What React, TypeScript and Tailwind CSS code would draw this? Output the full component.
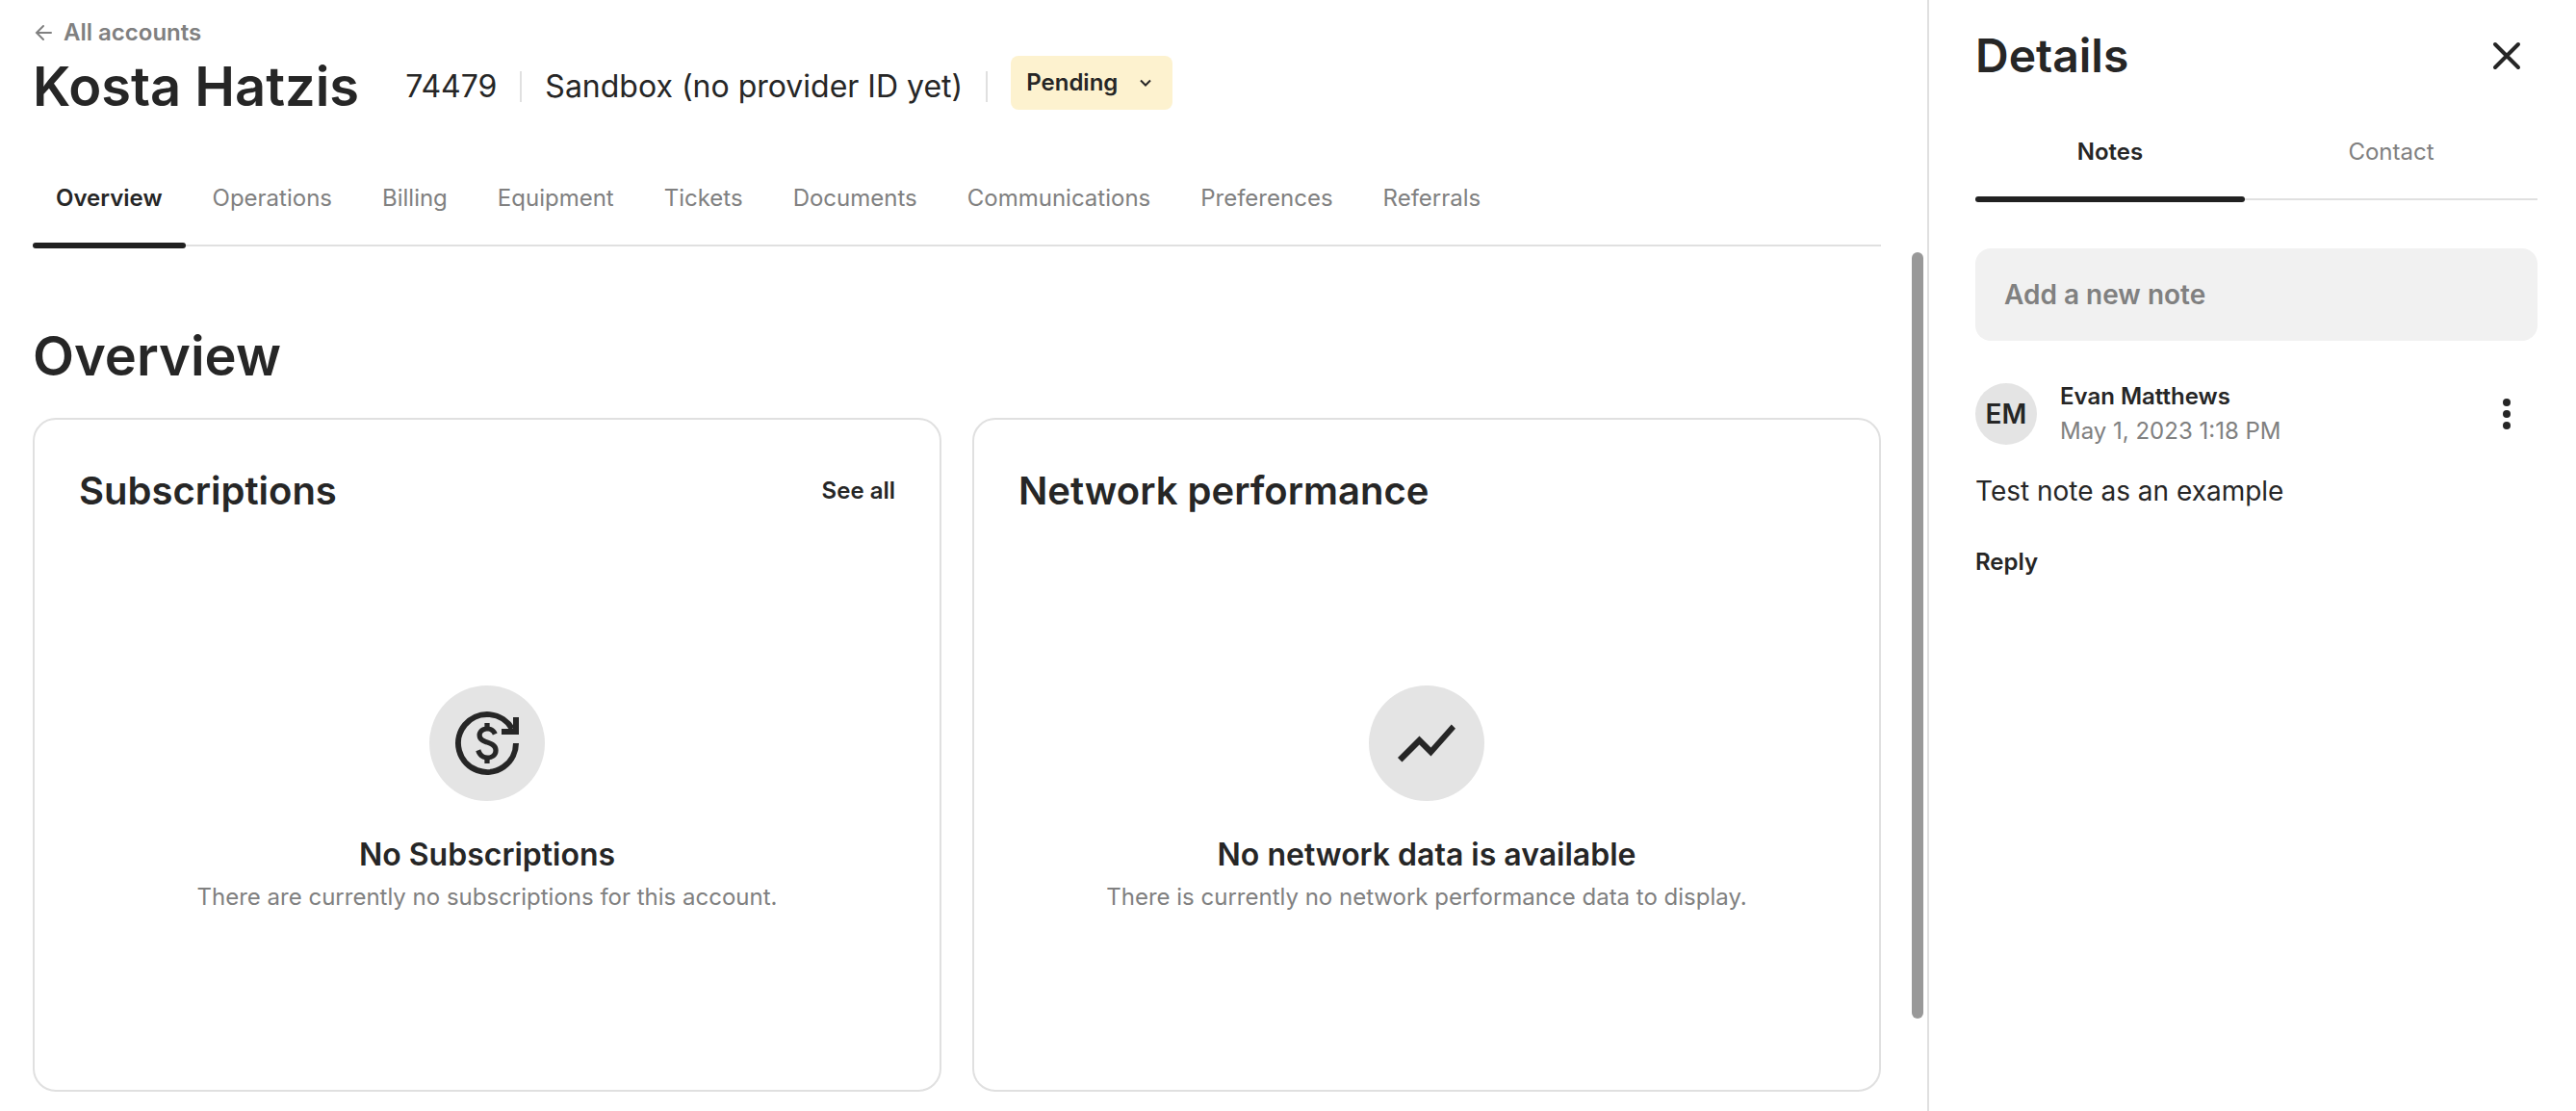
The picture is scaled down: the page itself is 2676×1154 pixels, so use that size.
import React from "react";

const accountTabs = [
  "Overview",
  "Operations",
  "Billing",
  "Equipment",
  "Tickets",
  "Documents",
  "Communications",
  "Preferences",
  "Referrals",
];

function BackArrow() {
  return (
    <svg viewBox="0 0 24 24" className="size-6" fill="none" stroke="currentColor" strokeWidth="2" strokeLinecap="round" aria-hidden="true">
      <path d="M19 12H5M11 5l-7 7 7 7" />
    </svg>
  );
}

function RecurringPaymentIcon() {
  return (
    <svg viewBox="0 0 24 24" className="size-18" aria-hidden="true">
      <path d="M22 12a10 10 0 1 1-1.34-5" fill="none" stroke="currentColor" strokeWidth="2" />
      <path d="M21 3h2v6h-6V7h4z" fill="currentColor" />
      <path
        fill="currentColor"
        d="M12.89 11.1c-1.78-.59-2.64-.96-2.64-1.9 0-1.02 1.11-1.39 1.81-1.39 1.31 0 1.79.99 1.9 1.34l1.58-.67c-.15-.44-.82-1.91-2.66-2.23V5h-1.75v1.26c-2.6.56-2.62 2.85-2.62 2.96 0 2.27 2.25 2.91 3.35 3.31 1.58.56 2.28 1.07 2.28 2.03 0 1.13-1.05 1.61-1.98 1.61-1.82 0-2.34-1.87-2.4-2.09l-1.66.67c.63 2.19 2.28 2.78 3.02 2.96V19h1.75v-1.24c.52-.09 3.02-.59 3.02-3.22.01-1.39-.6-2.61-3-3.44z"
      />
    </svg>
  );
}

function TrendIcon() {
  return (
    <svg viewBox="0 0 24 24" className="size-18" fill="currentColor" aria-hidden="true">
      <path d="M3.5 18.49l6-6.01 4 4L22 6.92l-1.41-1.41-7.09 7.97-4-4L2 16.99z" />
    </svg>
  );
}

type CardProps = {
  title: string;
  action?: string;
  icon: React.ReactNode;
  heading: string;
  text: string;
};

function OverviewCard({ title, action, icon, heading, text }: CardProps) {
  return (
    <section className="flex flex-col rounded-3xl border-2 border-[#e0e0e0] px-[46px] pt-12">
      <div className="flex items-center justify-between">
        <h3 className="text-[40px] leading-[52px] font-semibold">{title}</h3>
        {action && (
          <a href="#all" className="text-2xl leading-8 font-semibold">
            {action}
          </a>
        )}
      </div>
      <div className="mt-44 mb-45 flex flex-col items-center text-center">
        <div className="flex size-30 items-center justify-center rounded-full bg-[#e4e4e4]">{icon}</div>
        <h4 className="mt-8 text-[32px] leading-12 font-semibold">{heading}</h4>
        <p className="text-2xl leading-10 text-[#808080]">{text}</p>
      </div>
    </section>
  );
}

export default function App() {
  return (
    <div className="flex min-h-screen bg-white font-['Inter',sans-serif] text-[#262626]">
      <main className="flex min-w-0 grow flex-col pl-[34px]">
        <header className="mr-12 pt-[18px]">
          <a href="#accounts" className="flex items-center gap-2 text-2xl leading-8 font-semibold text-[#808080]">
            <BackArrow />
            All accounts
          </a>
          <div className="flex h-20 items-center">
            <h1 className="mr-12 text-[56px] leading-20 font-semibold">Kosta Hatzis</h1>
            <span className="text-[32px] leading-10">74479</span>
            <span className="mx-6 h-8 w-0.5 bg-[#e0e0e0]" />
            <span className="text-[32px] leading-10">Sandbox (no provider ID yet)</span>
            <span className="mx-6 h-8 w-0.5 bg-[#e0e0e0]" />
            <div className="relative mb-2">
              <select
                aria-label="Account status"
                className="h-14 appearance-none rounded-lg bg-[#fdf2cf] pr-14 pl-4 text-2xl font-semibold"
              >
                <option>Pending</option>
              </select>
              <svg
                viewBox="0 0 24 24"
                className="pointer-events-none absolute top-4 right-4 size-6"
                fill="none"
                stroke="currentColor"
                strokeWidth="2"
                aria-hidden="true"
              >
                <path d="m7 9.500 5 5 5-5" />
              </svg>
            </div>
          </div>
          <nav className="mt-11 flex gap-1 border-b-2 border-[#e0e0e0]">
            {accountTabs.map((tab, i) => (
              <a
                key={tab}
                href={"#" + tab.toLowerCase()}
                className={
                  i === 0
                    ? "relative px-6 pt-4 pb-8 text-2xl leading-8 font-semibold after:absolute after:inset-x-0 after:-bottom-1 after:h-1.5 after:rounded-full after:bg-[#212121]"
                    : "px-6 pt-4 pb-8 text-2xl leading-8 text-[#808080]"
                }
              >
                {tab}
              </a>
            ))}
          </nav>
        </header>
        <div className="flex grow">
          <div className="mt-[78px] mr-8 grow">
            <h2 className="text-[56px] leading-[72px] font-semibold">Overview</h2>
            <div className="mt-7 grid grid-cols-2 gap-8">
              <OverviewCard
                title="Subscriptions"
                action="See all"
                icon={<RecurringPaymentIcon />}
                heading="No Subscriptions"
                text="There are currently no subscriptions for this account."
              />
              <OverviewCard
                title="Network performance"
                icon={<TrendIcon />}
                heading="No network data is available"
                text="There is currently no network performance data to display."
              />
            </div>
          </div>
          <div className="mt-1.5 mr-1 w-3 pb-24">
            <div className="h-full rounded-full bg-[#999999]" />
          </div>
        </div>
      </main>
      <aside className="w-[674px] shrink-0 border-l-2 border-[#e0e0e0] pr-10 pl-12">
        <div className="flex items-center justify-between pt-6">
          <h2 className="text-5xl leading-[68px] font-semibold">Details</h2>
          <button aria-label="Close" className="flex size-16 items-center justify-center">
            <svg viewBox="0 0 32 32" className="size-8" fill="none" stroke="currentColor" strokeWidth="4" strokeLinecap="round" aria-hidden="true">
              <path d="M4 4l24 24M28 4 4 28" />
            </svg>
          </button>
        </div>
        <nav className="mt-10 flex border-b-2 border-[#e0e0e0]">
          <a
            href="#notes"
            className="relative w-70 pt-2.5 pb-8 text-center text-2xl leading-8 font-semibold after:absolute after:inset-x-0 after:-bottom-1 after:h-1.5 after:rounded-full after:bg-[#212121]"
          >
            Notes
          </a>
          <a href="#contact" className="grow pt-2.5 pb-8 text-center text-2xl leading-8 text-[#808080]">
            Contact
          </a>
        </nav>
        <input
          aria-label="Add a new note"
          placeholder="Add a new note"
          className="mt-[50px] block h-24 w-full rounded-2xl bg-[#f1f1f1] px-[30px] text-[28px] font-semibold placeholder:text-[#808080]"
        />
        <article className="mt-10">
          <div className="flex items-center">
            <div className="flex size-16 items-center justify-center rounded-full bg-[#e4e4e4] text-[28px] font-semibold">EM</div>
            <div className="ml-6">
              <p className="text-2xl leading-9 font-semibold">Evan Matthews</p>
              <p className="text-2xl leading-9 text-[#808080]">May 1, 2023 1:18 PM</p>
            </div>
            <button aria-label="Note options" className="ml-auto flex size-16 items-center justify-center">
              <svg viewBox="0 0 8 32" className="h-8 w-2" fill="currentColor" aria-hidden="true">
                <circle cx="4" cy="4" r="4" />
                <circle cx="4" cy="16" r="4" />
                <circle cx="4" cy="28" r="4" />
              </svg>
            </button>
          </div>
          <p className="mt-6 text-[28px] leading-10">Test note as an example</p>
          <button className="mt-9 text-2xl leading-9 font-semibold">Reply</button>
        </article>
      </aside>
    </div>
  );
}
